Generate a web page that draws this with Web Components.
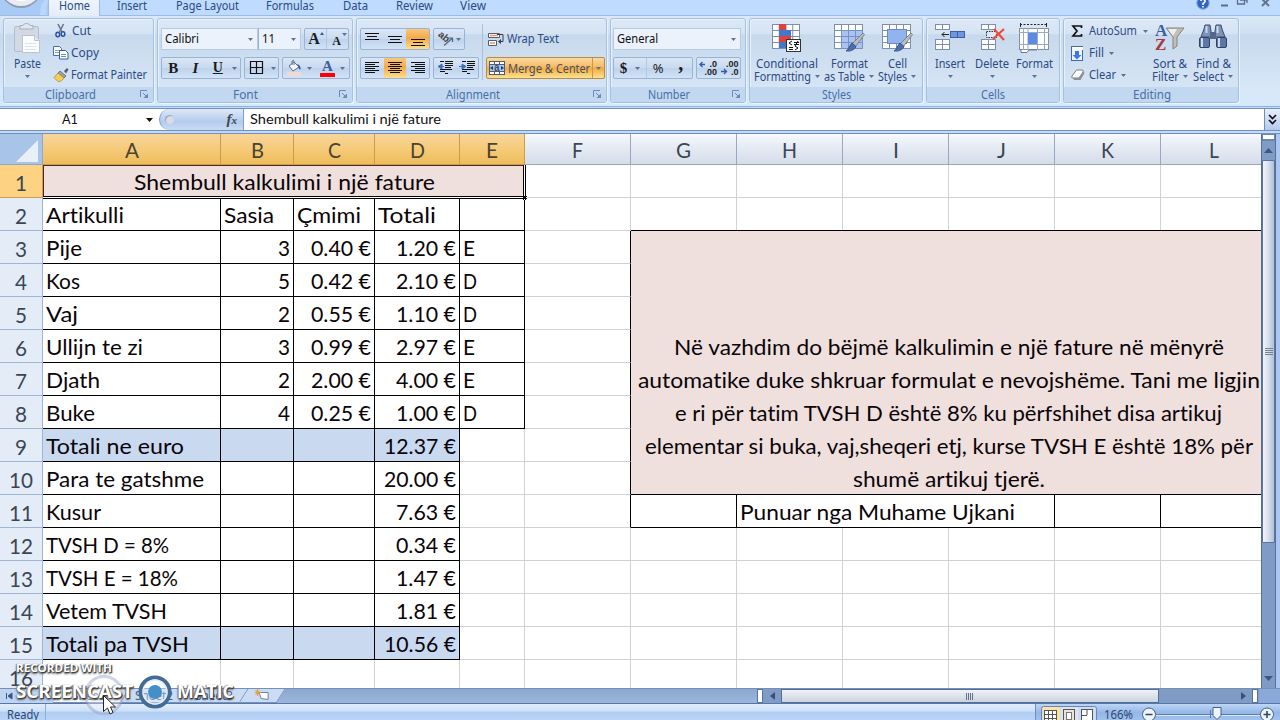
<!DOCTYPE html>
<html lang="sq">
<head>
<meta charset="utf-8">
<title>Shembull kalkulimi i një fature</title>
<style>
html,body{margin:0;height:720px;overflow:hidden;background:#bfdbff}
body{font-family:"Noto Sans","Open Sans",sans-serif;font-size:12px;color:#2b4b85;font-variant-ligatures:none}
</style>
</head>
<body>
<excel-app></excel-app>
<script>
const fits = [];
const def = (name, css, html, init) => {
  const tpl = document.createElement('template');
  customElements.define(name, class extends HTMLElement {
    constructor() { super(); this.attachShadow({mode: 'open'}); }
    connectedCallback() {
      if (this.ready) return;
      this.ready = true;
      tpl.innerHTML = '<style>' + css + '</style>' + (typeof html === 'function' ? html(this) : html);
      this.shadowRoot.append(document.importNode(tpl.content, true));
      if (init) init(this);
    }
  });
};

/* Text that is condensed or widened to a given advance width */
def('x-t', ':host{display:inline-block;white-space:nowrap;flex:none}span{display:inline-block;transform-origin:0 50%}', '<span><slot></slot></span>',
  el => { if (el.hasAttribute('w')) fits.push(el); });
const T = (s, w) => `<x-t w="${w}">${s.replace('&', '&amp;')}</x-t>`;

const grid = (x, y, w, h, nx, ny, fill = '#fff', st = '#7d8fae') => {
  let s = `<rect x="${x}" y="${y}" width="${w}" height="${h}" fill="${fill}" stroke="${st}"/>`;
  for (let i = 1; i < nx; i++) s += `<path d="M${x + w * i / nx} ${y}v${h}" stroke="${st}"/>`;
  for (let i = 1; i < ny; i++) s += `<path d="M${x} ${y + h * i / ny}h${w}" stroke="${st}"/>`;
  return s;
};
const brush = '<path d="M29 10l1.500 1.500-9 12-3-3z" fill="#b9bcc0" stroke="#6d7278" stroke-width=".8"/><path d="M18 20l4 3.500c-2 4-6 5-10 4.500 3-1.500 3-5.500 6-8z" fill="#4a6fae" stroke="#2c4a80" stroke-width=".8"/>';
const lines = (a) => a.map(([x, y, w]) => `<path d="M${x} ${y + .5}h${w}" stroke="#111"/>`).join('');
const al = k => [0, 1, 2, 3, 4, 5].map(i => { const w = i % 2 ? 10 : 14; return [k == 'l' ? 0 : k == 'r' ? 14 - w : (14 - w) / 2, i * 2 + 1, w]; });
const icons = {
  arr: [5, 3, '<path d="M0 0h5l-2.500 3z" fill="#5b7297"/>'],
  paste: [26, 30, '<rect x=".5" y="3.500" width="24" height="25" rx="1.500" fill="#d2d9e3" stroke="#b3bdcb"/><path d="M6 6V2.500h3Q9.500 .5 12.500 .5T16 2.500h3V6z" fill="#e3e7ed" stroke="#a4afbf"/><path d="M8.500 12.500h12l5 5v12h-17z" fill="#fbfcfe" stroke="#bcc4d0"/><path d="M20.500 12.500v5h5" fill="#e5e9f0" stroke="#bcc4d0"/><path d="M11 20.500h11M11 23.500h11M11 26.500h11" stroke="#dfe4ec"/>'],
  cut: [12, 14, '<path d="M3 0l4 8M8.500 0L4.500 8" stroke="#68778f" stroke-width="1.600"/><ellipse cx="2.800" cy="10.500" rx="1.900" ry="2.300" fill="none" stroke="#2b51a5" stroke-width="1.500"/><ellipse cx="8" cy="10" rx="1.800" ry="2.200" fill="none" stroke="#2b51a5" stroke-width="1.500"/>'],
  copy: [16, 14, '<path d="M.5 .5h6l2 2v7h-8z" fill="#fff" stroke="#4c6cac"/><path d="M2 4.500h5M2 6.500h4" stroke="#8aa4d0"/><path d="M6.500 4.500h6l2.500 2.500v6h-8.500z" fill="#fff" stroke="#3a5ca3"/><path d="M8 8.500h5M8 10.500h5" stroke="#6d8bc4"/>'],
  painter: [15, 14, '<path d="M10 3l3-3 1.500 1.500-2.500 4z" fill="#555b68"/><path d="M6 3l6 5-2 2-6-5z" fill="#9aa2b0" stroke="#535a68" stroke-width=".7"/><path d="M4 5l6 5c-2 3-5 4-6 3.500L0 9.500z" fill="#f3cf52" stroke="#ab832b" stroke-width=".7"/>'],
  launch: [9, 9, '<path d="M.5 7V.5H7" fill="none" stroke="#6b8ab5"/><path d="M3 3l3 3" stroke="#6b8ab5"/><path d="M8 3.500v4.500H3.500z" fill="#6b8ab5"/>'],
  grow: [16, 16, '<path d="M11 4l2-3 2 3z" fill="#35599a"/>'],
  borders: [14, 14, '<path d="M.5 .5h12v12H.5zM6.500 .5v12M.5 6.500h12" fill="none" stroke="#111" stroke-width="1.200"/>'],
  bucket: [15, 16, '<path d="M2 6l5-4 5 5-6 4z" fill="#f3f5f8" stroke="#5b6c8b"/><path d="M5 5V1q1.500-1.500 2 0v4" fill="none" stroke="#69778e"/><path d="M10 4q4 1 3.500 5.500Q11 9 12 7z" fill="#2f59a8"/><rect y="12" width="14" height="4" fill="#f3d9cf"/>'],
  top: [14, 14, lines([[0, 1, 14], [2, 4, 10], [0, 7, 14]])],
  mid: [14, 14, lines([[0, 4, 14], [2, 7, 10], [0, 10, 14]])],
  bot: [14, 14, lines([[0, 7, 14], [2, 10, 10], [0, 13, 14]])],
  left: [14, 14, lines(al('l'))], center: [14, 14, lines(al('c'))], right: [14, 14, lines(al('r'))],
  orient: [17, 16, '<path d="M6 14.500l8-7M14.500 11V7h-4" fill="none" stroke="#58657a" stroke-width="1.200"/>'],
  outd: [16, 14, lines([[3, 0, 4], [8, 0, 8], [8, 2, 8], [8, 4, 8], [8, 6, 6], [3, 8, 12], [3, 10, 5], [8, 12, 3]]) + '<path d="M5 3v5L1 5.500zM4 5.500h3" fill="#3d6fc0" stroke="#3d6fc0"/>'],
  ind: [16, 14, lines([[3, 0, 4], [8, 0, 8], [8, 2, 8], [8, 4, 8], [8, 6, 6], [3, 8, 12], [3, 10, 5], [8, 12, 3]]) + '<path d="M3 3v5l4-2.500zM0 5.500h4" fill="#3d6fc0" stroke="#3d6fc0"/>'],
  wrap: [16, 15, '<path d="M.5 1.500h11v4H.5zM.5 8.500h8v5H.5z" fill="#fff" stroke="#555d6a"/><path d="M2 3.500h8M2 11h5" stroke="#e09a78" stroke-width="1.500"/><path d="M9 2.500h6v7h-3" fill="none" stroke="#333d50"/><path d="M13 7v5l-3-2.500z" fill="#333d50"/>'],
  merge: [16, 14, '<rect x=".5" y=".5" width="15" height="13" fill="#fff" stroke="#4d5b75"/><path d="M5.500 0v3M10.500 0v3M5.500 11v3M10.500 11v3M0 3.500h16M0 10.500h16" stroke="#4d5b75"/><rect x="1" y="4" width="14" height="6" fill="#a5c6f1"/><path d="M1 7l3-2v4zM15 7l-3-2v4z" fill="#183a7a"/>'],
  decp: [16, 14, '<path d="M0 3.500h5M2.500 1L0 3.500 2.500 6" fill="none" stroke="#315ca8" stroke-width="1.300"/>'],
  decm: [16, 14, '<path d="M0 10.500h5M3 8l2.500 2.500L3 13" fill="none" stroke="#315ca8" stroke-width="1.300"/>'],
  cond: [30, 29, grid(.5, 1.500, 27, 24, 4, 4) + '<path d="M7 1h7v6H7zM7 13h12v6H7z" fill="#d8453f"/><path d="M7 7h12v6H7zM7 19h7v6H7z" fill="#4676c8"/><rect x="14.500" y="16.500" width="14" height="12" fill="#fff" stroke="#333"/><path d="M20 18l-3 2 3 2M17 24.500h4M17 26.500h4M22 19.500h5M22 21.500h5M26 18l-3 5M23 23l3 2-3 2" fill="none" stroke="#111"/>'],
  table: [31, 29, grid(.5, 1.500, 28, 24, 4, 4) + '<path d="M8 7.500h20V25H8z" fill="#a9c3ee"/><path d="M7.500 7.500h21v18M7.500 7.500v18M14.500 7.500v18M21.500 7.500v18M8 13.500h20M8 19.500h20" fill="none" stroke="#7591c8"/>' + brush],
  cell: [31, 29, grid(.5, 1.500, 28, 24, 4, 4) + '<rect x="5.500" y="6.500" width="19" height="14" fill="#92b4ee" stroke="#6b8ac4"/>' + brush],
  insert: [31, 28, grid(.5, 1.500, 14, 5, 2, 1) + grid(.5, 16.500, 14, 10, 2, 2) + grid(15.500, 8.500, 14, 6, 2, 1, '#6f97e0', '#3e5fa6') + '<path d="M14 11.500H7M9.500 9L7 11.500 9.500 14" fill="none" stroke="#222"/>'],
  del: [31, 28, grid(4.500, 1.500, 14, 5, 2, 1) + grid(4.500, 16.500, 14, 10, 2, 2) + '<rect x="9.500" y="8.500" width="10" height="6" fill="#dce6f7" stroke="#333" stroke-dasharray="1.500 1"/><path d="M17 6l10 11M27 6L16 16" stroke="#ec4b35" stroke-width="2.200"/>'],
  format: [31, 30, '<path d="M1 1.500h26" stroke="#222" stroke-dasharray="2 1.500"/><path d="M1.500 0v4M27.500 0v4" stroke="#222"/><rect x=".5" y="5.500" width="29" height="21" fill="#fff" stroke="#7d8fae"/><path d="M9 5v22M18.500 5v22M25.500 5v22M4.500 5v22M0 9.500h30M0 21.500h30" stroke="#9aa9c2"/><rect x="9" y="10" width="9" height="11" fill="#5d8be3"/><path d="M2 27v2.500h6L10 27h8" fill="#fff" stroke="#6b7c99"/>'],
  sum: [11, 12, '<path d="M9.500 3V1H1l4 5-4 5h8.500V9" fill="none" stroke="#111" stroke-width="1.700"/>'],
  fill: [13, 15, '<rect x=".5" y=".5" width="11" height="14" fill="#eaf2fd" stroke="#4468a5"/><path d="M1 1h11v3H1z" fill="#fff"/><path d="M4 5h4v4h2.500L6 13.500 1.500 9H4z" fill="#3e7be0"/>'],
  clear: [15, 12, '<path d="M5.500 1h5.500q2 0 1 2L8 9H2Q0 9 1 7z" fill="#fff" stroke="#777d88"/><path d="M8 9l4.500-6.500L13.500 4 9.500 11H3L2 9z" fill="#8b909a"/>'],
  sort: [30, 30, '<path d="M11 5h18l-7 9v9l-4 3V14z" fill="#c0bfbb" stroke="#85847f"/><path d="M13 6h9l-4 7z" fill="#efeeea"/>'],
  find: [28, 27, '<path d="M6 2h5l1 6v6H2l3-8zM22 2h-5l-1 6v6h10l-3-8z" fill="#7e93b8" stroke="#3b4c6b"/><rect x="11" y="9" width="6" height="7" fill="#53678c"/><rect x=".5" y="14.500" width="10" height="10" rx="1.500" fill="#5c76a6" stroke="#2f4265"/><rect x="17.500" y="14.500" width="10" height="10" rx="1.500" fill="#5c76a6" stroke="#2f4265"/><path d="M3 15v9M20 15v9M7.500 3v7M18.500 3v7" stroke="#cdd9ee" stroke-width="2"/>'],
  help: [14, 14, '<circle cx="7" cy="6" r="6.200" fill="#2e66c6" stroke="#8ba5cf"/><path d="M4.800 4q.5-2 2.400-1.800T9 4.500Q8.800 5.500 7 6.500V8M7 9v1.500" fill="none" stroke="#fff" stroke-width="1.600"/>'],
  expand: [9, 12, '<path d="M1 1l3.500 3.500L8 1M1 6l3.500 3.500L8 6" fill="none" stroke="#111" stroke-width="1.600"/>'],
};
const svg = n => { const [w, h, s] = icons[n]; return `<svg width="${w}" height="${h}" viewBox="0 0 ${w} ${h}">${s}</svg>`; };
def('x-icon', ':host{display:inline-flex;flex:none;position:relative}svg{display:block;overflow:visible}', el => svg(el.getAttribute('name')));
const I = (n, st = '') => `<x-icon name="${n}" style="${st}"></x-icon>`;
const A = (st = '') => I('arr', st);

/* Ribbon tabs */
def('ribbon-tabs', `:host{display:flex;height:15px;position:relative;background:#bfdbff;box-sizing:border-box}
 .tab{line-height:12px;height:15px;box-sizing:border-box}
 .on{width:52px;background:linear-gradient(#eef5fd,#e3edf9);border:solid #9dbde6;border-width:0 1px;height:16px;padding-left:10px;position:relative;z-index:1}
 .orb{width:48px;flex:none;overflow:hidden;height:15px}
 .r{display:flex;margin-left:auto;width:84px;gap:0}`,
 `<div class="orb"><svg width="48" height="15"><rect width="48" height="15" fill="#a9caf5"/><path d="M46 15q0-8 2-15h-2q-6 2-6 15z" fill="#b9d6fb"/><circle cx="21" cy="-13" r="21" fill="#8f9db4"/><circle cx="21" cy="-14" r="20" fill="#e9edf3"/><circle cx="21" cy="-16" r="17" fill="#fff"/></svg></div>
 <div class="tab on">${T('Home', 31)}</div>
 ${[['Insert', 30, 17], ['Page Layout', 63, 29], ['Formulas', 48, 27], ['Data', 25, 29], ['Review', 37, 28], ['View', 26, 27]].map(([s, w, m]) => `<div class="tab" style="margin-left:${m}px">${T(s, w)}</div>`).join('')}
 <div class="r">${I('help', 'margin-top:-3px')}<svg width="68" height="15"><path d="M11 5.500h7" stroke="#5a6d8e" stroke-width="2"/><path d="M34.500 0v4h-7v-4M30 0h7v3" fill="none" stroke="#5a6d8e" stroke-width="1.300"/><path d="M52 -1l7 7M59 -1l-7 7" stroke="#64748f" stroke-width="2"/></svg></div>`);

/* Ribbon group */
def('rb-group', `:host{display:flex;flex-direction:column;flex:none;box-sizing:border-box;height:85px;border:1px solid #a5c1e2;border-radius:3px;background:linear-gradient(#dce8f6 0,#d6e3f3 18%,#c8d9ed 19%,#d9e8f7 100%);box-shadow:1px 1px 0 #eaf3fd,inset 1px 1px 0 #e8f1fb;overflow:hidden}
 .c{height:68px;display:flex;box-sizing:border-box;flex:none}.l{height:15px;flex:none;background:#c1d8f0;display:flex;position:relative;color:#4a6fa8;line-height:14px;align-items:center}
 .l x-icon{margin-left:auto;margin-right:4px}`,
 el => `<div class="c"><slot></slot></div><div class="l"><x-t w="${el.getAttribute('lw')}" style="margin-left:${el.getAttribute('lx')}px">${el.getAttribute('label')}</x-t>${el.hasAttribute('launch') ? I('launch') : ''}</div>`);

/* Small labelled command */
def('rb-cmd', ':host{display:flex;align-items:center;height:22px;line-height:16px}.i{flex:none;display:flex;justify-content:flex-start}', el => `<div class="i" style="width:${el.getAttribute('iw')}px">${I(el.getAttribute('icon'))}</div><slot></slot>`);

/* Large command: icon over one or two caption lines */
def('rb-big', ':host{display:flex;flex-direction:column;align-items:center;box-sizing:border-box;padding-top:4px;flex:none}.i{height:34px;display:flex;align-items:flex-start;position:relative}.t{line-height:13px;height:13px;display:flex;align-items:center;gap:4px;flex:none}.z{position:absolute;font:bold 17px/14px "Liberation Serif",serif;left:0}',
 el => { const g = n => el.getAttribute(n); return `<div class="i">${I(g('icon'))}${g('icon') == 'sort' ? '<div class="z" style="top:1px;color:#3c5fa8">A</div><div class="z" style="top:15px;color:#a5393d">Z</div>' : ''}</div><div class="t">${T(g('a'), g('aw'))}</div><div class="t">${g('b') ? T(g('b'), g('bw')) : ''}${A()}</div>`; });
const big = (icon, w, m, a, aw, b = '', bw = 0) => `<rb-big style="width:${w}px;margin-left:${m}px" icon="${icon}" a="${a.replace('&', '&amp;')}" aw="${aw}" b="${b}" bw="${bw}"></rb-big>`;

/* Joined button strip */
def('rb-strip', ':host{display:flex;flex:none;box-sizing:border-box;height:22px;border:1px solid #9ab4d8;border-radius:2px;background:linear-gradient(#d9e6f6,#c9daef 50%,#bdd2ec 51%,#d3e3f6)}', '<slot></slot>');
def('rb-b', `:host{display:flex;align-items:center;justify-content:center;height:20px;flex:1;position:relative;box-sizing:border-box;color:#1b1b1b}:host([on]){background:linear-gradient(#f9c77c,#f5a848 45%,#fde08a)}:host([sep]){border-left:1px solid #b1c8e5}`, '<slot></slot>');
def('rb-combo', ':host{display:flex;align-items:center;box-sizing:border-box;height:22px;border:1px solid #b3cbe8;background:#ebf2fb;color:#111;padding:0 4px 0 3px;justify-content:space-between;flex:none;line-height:18px}', '<slot></slot>' + A());

def('ribbon-bar', `:host{display:flex;height:92px;border-top:1px solid #9dbde6;border-bottom:1px solid #8fb2dd;box-sizing:border-box;background:linear-gradient(#dbe8f7,#cfdff1 20%,#c7d9ee 21%,#d8e7f8 80%,#d5e9fb);padding:2px 0 0 3px;gap:3px}
 .rows{display:flex;flex-direction:column;gap:7px;padding-top:9px;flex:none}.row{display:flex;gap:3px;height:22px;flex:none}
 .list{padding-top:1px;flex:none}.ser{font-family:"Liberation Serif",serif;font-weight:bold;font-size:15px;line-height:18px}
 .sep{width:1px;height:56px;background:#a6c0e0;margin:5px 3px 0 17px;flex:none}.dec{font:bold 9px/8px "Liberation Sans",sans-serif;position:absolute;top:2px;left:2px;width:18px;text-align:right;color:#222}`,
`<rb-group style="width:151px" label="Clipboard" lw="51" lx="41" launch>${big('paste', 42, 2, 'Paste', 27)}
 <div class="list" style="margin-left:4px"><rb-cmd icon="cut" iw="17" style="padding-left:3px">${T('Cut', 19)}</rb-cmd><rb-cmd icon="copy" iw="18" style="padding-left:1px">${T('Copy', 28)}</rb-cmd><rb-cmd icon="painter" iw="17" style="padding-left:2px">${T('Format Painter', 76)}</rb-cmd></div></rb-group>
 <rb-group style="width:196px" label="Font" lw="25" lx="75" launch><div class="rows" style="margin-left:3px">
  <div class="row" style="gap:0"><rb-combo style="width:97px">${T('Calibri', 34)}</rb-combo><rb-combo style="width:43px;border-left:1px solid #9ab4d8">${T('11', 13)}</rb-combo>
   <rb-strip style="width:45px;margin-left:3px"><rb-b><span class="ser" style="font-size:16px;margin-right:3px">A</span>${I('grow', 'position:absolute;left:4px;top:2px')}</rb-b><rb-b sep><span class="ser" style="font-size:12px;padding-top:3px;margin-right:2px">A</span><x-icon name="arr" style="position:absolute;left:15px;top:4px"></x-icon></rb-b></rb-strip></div>
  <div class="row"><rb-strip style="width:80px"><rb-b><span class="ser">B</span></rb-b><rb-b><span class="ser" style="font-style:italic">I</span></rb-b><rb-b><span class="ser" style="text-decoration:underline;font-size:14px">U</span></rb-b><rb-b style="flex:none;width:11px">${A()}</rb-b></rb-strip>
   <rb-strip style="width:35px"><rb-b style="gap:7px;padding-left:2px">${I('borders')}${A()}</rb-b></rb-strip>
   <rb-strip style="width:68px"><rb-b style="gap:5px">${I('bucket')}${A()}</rb-b><rb-b style="gap:5px"><span class="ser" style="color:#3c5f9e;border-bottom:4px solid #f00;line-height:13px;width:15px;text-align:center">A</span>${A()}</rb-b></rb-strip></div></div></rb-group>
 <rb-group style="width:251px" label="Alignment" lw="54" lx="89" launch><div class="rows" style="margin-left:3px">
  <div class="row"><rb-strip style="width:70px"><rb-b>${I('top')}</rb-b><rb-b>${I('mid')}</rb-b><rb-b on>${I('bot')}</rb-b></rb-strip><rb-strip style="width:32px"><rb-b style="gap:1px"><span style="font:bold 10px/10px 'Liberation Sans';transform:rotate(40deg);position:absolute;left:4px;top:3px;color:#444">ab</span>${I('orient')}${A()}</rb-b></rb-strip></div>
  <div class="row"><rb-strip style="width:70px"><rb-b>${I('left')}</rb-b><rb-b on>${I('center')}</rb-b><rb-b>${I('right')}</rb-b></rb-strip><rb-strip style="width:46px"><rb-b>${I('outd')}</rb-b><rb-b>${I('ind')}</rb-b></rb-strip></div></div>
  <div class="sep" style="margin-left:3px"></div><div class="rows"><rb-cmd icon="wrap" iw="19" style="padding-left:2px">${T('Wrap Text', 52)}</rb-cmd>
  <rb-strip style="width:119px;border-color:#b58d47;background:linear-gradient(#fbd9a0,#f6bb62 45%,#f3a83e 50%,#fde28e)"><rb-b style="justify-content:flex-start;padding-left:2px;color:#47506a">${I('merge')}<span style="position:absolute;left:7px;top:3px;font:bold 10px/13px 'Liberation Sans'">a</span><span style="width:3px"></span>${T('Merge &', 45)}<span style="width:3px"></span>${T('Center', 34)}</rb-b><rb-b sep style="flex:none;width:12px;border-color:#c6994a">${A()}</rb-b></rb-strip></div></rb-group>
 <rb-group style="width:136px" label="Number" lw="42" lx="37" launch><div class="rows" style="margin-left:2px"><rb-combo style="width:128px">${T('General', 41)}</rb-combo>
  <div class="row"><rb-strip style="width:80px"><rb-b style="flex:none;width:32px;gap:8px"><span class="ser">$</span>${A()}</rb-b><rb-b sep style="font-size:13px">%</rb-b><rb-b><span class="ser" style="font-size:20px;line-height:2px;padding-bottom:11px">,</span></rb-b></rb-strip>
  <rb-strip style="width:45px"><rb-b>${I('decp')}<span class="dec">.0<br>.00</span></rb-b><rb-b>${I('decm')}<span class="dec">.00<br>.0</span></rb-b></rb-strip></div></div></rb-group>
 <rb-group style="width:174px" label="Styles" lw="29" lx="72">${big('cond', 66, 4, 'Conditional', 62, 'Formatting', 57)}${big('table', 52, 3, 'Format', 37, 'as Table', 41)}${big('cell', 40, 2, 'Cell', 19, 'Styles', 29)}</rb-group>
 <rb-group style="width:134px" label="Cells" lw="24" lx="54">${big('insert', 36, 5, 'Insert', 30)}${big('del', 38, 5, 'Delete', 34)}${big('format', 38, 4, 'Format', 37)}</rb-group>
 <rb-group style="width:176px" label="Editing" lw="38" lx="69"><div class="list" style="width:83px;margin-left:7px"><rb-cmd icon="sum" iw="17" style="padding-left:1px">${T('AutoSum', 48)}${A('margin-left:6px')}</rb-cmd><rb-cmd icon="fill" iw="18" >${T('Fill', 15)}${A('margin-left:5px')}</rb-cmd><rb-cmd icon="clear" iw="18">${T('Clear', 27)}${A('margin-left:5px')}</rb-cmd></div>${big('sort', 38, -3, 'Sort &', 34, 'Filter', 27)}${big('find', 42, 3, 'Find &', 35, 'Select', 31)}</rb-group>`);

/* Formula bar */
def('formula-bar', `:host{display:flex;height:23px;box-sizing:border-box;border:solid #7590b8;border-width:1px 0;background:#fff;color:#111;font-family:Lato,"Noto Sans",sans-serif;font-size:13px;line-height:21px;margin-top:0}
 .n{width:159px;display:flex;align-items:center;box-sizing:border-box;padding-left:62px}.p{width:85px;box-sizing:border-box;background:linear-gradient(#dfe9f7,#b3cbee 60%,#c9dcf5);border:1px solid #7c9ccb;border-width:0 1px 0 1px;border-radius:11px 0 0 11px;display:flex;align-items:center}
 .k{width:9px;height:9px;border-radius:5px;background:#d9dee6;box-shadow:inset 1px 1px 1px #98a7bf;margin-left:5px}.f{margin-left:auto;margin-right:6px;font:italic bold 15px/18px "Liberation Serif",serif;color:#444}
 .f small{font-size:11px}.v{padding-left:6px;flex:1}.x{width:16px;background:linear-gradient(#e6effb,#b4cbee);border-left:1px solid #6f8db9;display:flex;align-items:center;justify-content:center;box-sizing:border-box}`,
 `<div class="n">${T('A1', 16)}<svg width="7" height="4" style="margin-left:68px"><path d="M0 0h7L3.500 4z" fill="#111"/></svg></div><div class="p"><div class="k"></div><div class="f">f<small>x</small></div></div><div class="v">${T('Shembull kalkulimi i një fature', 191)}</div><div class="x">${I('expand')}</div>`);

/* Worksheet */
const cols = [43, 178, 73, 81, 85, 65, 106, 106, 106, 106, 106, 106, 106];
const data = [['Artikulli', 78, 'Sasia', 50, 'Çmimi', 64, 'Totali', 58, '', 0],
 ['Pije', 36, '3', 12, '0.40 €', 60, '1.20 €', 60, 'E', 12], ['Kos', 34, '5', 12, '0.42 €', 60, '2.10 €', 60, 'D', 14],
 ['Vaj', 32, '2', 12, '0.55 €', 60, '1.10 €', 60, 'D', 14], ['Ullijn te zi', 97, '3', 12, '0.99 €', 60, '2.97 €', 60, 'E', 12],
 ['Djath', 54, '2', 12, '2.00 €', 60, '4.00 €', 60, 'E', 12], ['Buke', 49, '4', 12, '0.25 €', 60, '1.00 €', 60, 'D', 14],
 ['Totali ne euro', 138, '', 0, '', 0, '12.37 €', 72], ['Para te gatshme', 158, '', 0, '', 0, '20.00 €', 72], ['Kusur', 55, '', 0, '', 0, '7.63 €', 60],
 ['TVSH D = 8%', 123, '', 0, '', 0, '0.34 €', 60], ['TVSH E = 18%', 132, '', 0, '', 0, '1.47 €', 60], ['Vetem TVSH', 121, '', 0, '', 0, '1.81 €', 60], ['Totali pa TVSH', 143, '', 0, '', 0, '10.56 €', 72]];
def('sheet-grid', `:host{display:block;width:1261px;height:554px;overflow:hidden;background:#fff;color:#0a0508;font-family:Lato,"Noto Sans",sans-serif;font-size:20.500px;flex:none}
 .g{display:grid;grid-template-columns:${cols.map(c => c + 'px').join(' ')};grid-template-rows:31px repeat(16,33px);width:1315px}
 .g>div{box-sizing:border-box;border:solid #cfd3d8;border-width:0 1px 1px 0;line-height:33px;padding:1px 3px 0 3px;white-space:nowrap;min-width:0;height:auto;overflow:hidden}
 .g .h{background:linear-gradient(#f6f9fc,#e5ebf4 45%,#d5dde9);border-color:#97a8c0;color:#3a4654;text-align:center;line-height:31px;padding:0;font-size:21px}
 .g .h.on{background:linear-gradient(#f8d59b,#f5ca79 50%,#eebd5b);border-color:#cf9a4b;color:#4a4433}
 .g .r{background:#e4ecf7;border-color:#9eb6d6;color:#3a4654;text-align:center;padding:1px 0 0;font-size:21px}.g .r.on{background:#fdd283;border-color:#d69a4f}
 .g .k{border-color:#000}.g .n{text-align:right}.g .b{background:#c8d9f0}.g .p{background:#efdfdd}
 .g .t{grid-area:2/2/3/7;text-align:center;border-color:#000;position:relative;box-shadow:inset 1px 1px 0 #4b2b22;padding-right:2px}
 .g .m{grid-area:4/8/12/14;display:flex;flex-direction:column;justify-content:flex-end;align-items:center;line-height:33px;box-shadow:0 -1px 0 #000;overflow:visible;padding:0}
 .m x-t{position:relative;top:2px}
 .g .c{background:#a9c4e9;border-color:#8ba8d2;padding:6px 4px 4px 0;display:flex;justify-content:flex-end}.sel{grid-area:2/2/3/7;position:relative}
 .g>.sel{border:0;overflow:visible;padding:0}.sel i{position:absolute;box-sizing:border-box}`,
 () => {
  let s = '<div class="c"><svg width="22" height="22"><path d="M22 0v22H0z" fill="#e9eff6"/></svg></div>';
  'ABCDEFGHIJKL'.split('').forEach((c, i) => s += `<div class="h ${i < 5 ? 'on' : ''}" style="grid-area:1/${i + 2}">${T(c, [14, 13, 13, 15, 12, 11, 15, 15, 6, 9, 13, 10][i])}</div>`);
  for (let r = 1; r <= 16; r++) {
    s += `<div class="r ${r == 1 ? 'on' : ''}" style="grid-area:${r + 1}/1">${T('' + r, r > 9 ? 24 : 12)}</div>`;
    for (let c = 1; c <= 12; c++) {
      if (r == 1 && c <= 5 || r > 2 && r < 11 && c > 6 || r == 11 && c > 7 && c < 11) continue;
      const d = r >= 2 && r <= 15 ? data[r - 2] : [], v = d[2 * c - 2], w = d[2 * c - 1];
      let k = r >= 2 && r <= 15 && (c <= 4 || c == 5 && r <= 8) || r == 11 && c > 6 ? 'k ' : '';
      if (r > 2 && c > 1 && c < 5) k += 'n ';
      if ((r == 9 || r == 15) && c <= 4) k += 'b';
      const edge = c == 6 && r > 2 && r < 12 ? ';border-right-color:#000' : '';
      s += `<div class="${k}" style="grid-area:${r + 1}/${c + 1}${edge}">${v ? T(v, w) : ''}</div>`;
    }
  }
  s += `<div class="t p">${T('Shembull kalkulimi i një fature', 301)}</div><div class="sel"><i style="left:0;right:0;bottom:-1px;height:3px;background:#fff;border:solid #000;border-width:1px 0"></i><i style="right:-1px;top:0;bottom:-1px;width:3px;background:#fff;border:solid #000;border-width:0 1px"></i><i style="right:-2px;bottom:-2px;width:5px;height:5px;background:#000;border:1px dotted #fff"></i></div>`;
  s += `<div class="m p k">${[['Në vazhdim do bëjmë kalkulimin e një fature në mënyrë', 550], ['automatike duke shkruar formulat e nevojshëme. Tani me ligjin', 622], ['e ri për tatim TVSH D është 8% ku përfshihet disa artikuj', 547], ['elementar si buka, vaj,sheqeri etj, kurse TVSH E është 18% për', 608], ['shumë artikuj tjerë.', 192]].map(([a, w]) => T(a, w)).join('')}</div>`;
  s += `<div class="k" style="grid-area:12/9/13/12">${T('Punuar nga Muhame Ujkani', 275)}</div>`;
  return `<div class="g">${s}</div>`;
 });

def('v-scroll', `:host{display:flex;flex-direction:column;width:15px;height:554px;background:#809cc6;border:solid #54719d;border-width:0 1px;box-sizing:border-box;flex:none;align-items:stretch}
 .s{height:7px;background:#fff;border:1px solid #6a87b2;box-sizing:border-box;border-bottom-width:2px}.a{height:19px;display:flex;align-items:center;justify-content:center}.t{height:383px;background:linear-gradient(90deg,#f2f5fa,#d8dfeb 50%,#aebfd9);border:1px solid #5b7499;box-sizing:border-box;border-radius:1px;display:flex;align-items:center;justify-content:center}.e{margin-top:auto}`,
 `<div class="s"></div><div class="a"><svg width="9" height="5"><path d="M0 5l4.500-5L9 5z" fill="#3b5880"/></svg></div><div class="t"><svg width="8" height="8"><path d="M0 .5h8M0 2.500h8M0 4.500h8M0 6.500h8" stroke="#71829b"/></svg></div><div class="a e"><svg width="9" height="5"><path d="M0 0h9L4.500 5z" fill="#3b5880"/></svg></div>`);

/* Sheet tabs with the horizontal scroll bar */
def('sheet-tabs', `:host{display:flex;height:15px;background:linear-gradient(#8ba7cf,#9db6dc);border-top:1px solid #7590b8;box-sizing:border-box;line-height:14px;overflow:hidden;align-items:center;color:#3b5c91;position:relative}
 .nav{width:57px;padding-left:6px;box-sizing:border-box;background:#bfd4f1;height:14px;display:flex;align-items:center;flex:none}.tb{background:#cadcf4;height:14px;transform:skewX(-32deg);border-right:1px solid #7891b9;border-bottom:1px solid #7891b9;flex:none;box-sizing:border-box;text-align:center}
 .tb x-t,.tb svg{transform:skewX(32deg)}.h{margin-left:auto;width:502px;display:flex;height:14px;align-items:center;flex:none;background:#809bc4}.th{width:378px;height:14px;box-sizing:border-box;border:1px solid #526d96;background:linear-gradient(#eff2f7,#cad3df);display:flex;align-items:center;justify-content:center;margin-left:6px}
 .sp{width:6px;height:14px;background:#fff;border:1px solid #58759f;box-sizing:border-box}`,
 `<div class="nav"><svg width="40" height="8"><path d="M.5 1v6M6 1v6L2 4z" stroke="#36568c" fill="#36568c"/></svg></div>
 <div class="tb" style="width:68px;background:#fff">${T('Sheet1', 38)}</div><div class="tb" style="width:59px">${T('Sheet2', 38)}</div><div class="tb" style="width:60px">${T('Sheet3', 38)}</div>
 <div class="tb" style="width:37px"><svg width="16" height="12"><path d="M4.500 3.500h9v7l-7-1z" fill="#fff" stroke="#6f81a0"/><path d="M3 0v7M0 3.500h6M1 1l4 5M5 1L1 6" stroke="#e99a34"/></svg></div>
 <div class="h"><div class="sp"></div><svg width="5" height="8" style="margin-left:7px"><path d="M5 0v8L0 4z" fill="#35517d"/></svg><div class="th"><svg width="8" height="7"><path d="M.5 0v7M2.500 0v7M4.500 0v7M6.500 0v7" stroke="#61718b"/></svg></div><svg width="5" height="8" style="margin-left:82px"><path d="M0 0v8l5-4z" fill="#35517d"/></svg><div class="sp" style="margin-left:6px"></div></div><div style="width:21px;height:14px;flex:none;background:#8aa8d8"></div>`);

def('status-bar', `:host{display:flex;height:18px;border-top:1px solid #5578aa;box-sizing:border-box;background:linear-gradient(#e0ecfb,#cfe1f8 40%,#b0cdf3 50%,#bcd5f7);line-height:15px;overflow:hidden;color:#2c4872}
 .a{width:46px;padding:3px 0 0 7px;box-sizing:border-box;border-right:1px solid #90aeda;flex:none}.z{margin-left:auto;width:245px;background:linear-gradient(#bfd6f6,#95b7e6 50%,#a3c3ee);border-left:1px solid #6e8fc0;display:flex;flex:none;padding-top:2px;box-sizing:border-box}svg{flex:none}`,
 `<div class="a">${T('Ready', 32)}</div><div class="z"><svg width="58" height="16" style="margin-left:5px"><rect x=".5" y=".5" width="55" height="18" rx="2" fill="#cbdcf4" stroke="#6b87b3"/><rect x="2" y="1" width="17" height="15" fill="#fbe3a0"/>${grid(3.500, 4.500, 12, 12, 3, 3, '#fff', '#555')}<rect x="20" y="1" width="17" height="15" fill="#dde4ed"/><rect x="22.500" y="3.500" width="11" height="12" fill="#e9e5dc" stroke="#555"/><rect x="25.500" y="6.500" width="5" height="7" fill="#fff" stroke="#777"/><rect x="40.500" y="3.500" width="11" height="12" fill="#fff" stroke="#555"/><path d="M46 3v6M41 9.500h5" stroke="#555"/></svg><div style="padding-top:1px;margin-left:5px">${T('166%', 29)}</div>
 <svg width="140" height="16" style="margin-left:7px"><path d="M16 8.500h108" stroke="#557bb0"/><path d="M16 9.500h108" stroke="#dce9fb"/><path d="M70.500 4v8" stroke="#557bb0"/><g fill="#eef4fc" stroke="#46618c"><circle cx="9" cy="8.500" r="6.500"/><circle cx="127" cy="8.500" r="6.500"/><path d="M73 1.500h8v8l-4 4-4-4z"/></g><path d="M5.500 8.500h7M123.500 8.500h7M127 5v7" stroke="#33486c" stroke-width="1.600"/></svg></div>`);

/* Recorder watermark and mouse pointer, over the workbook */
def('screencast-mark', `:host{position:absolute;left:16px;top:661px;width:222px;height:56px;color:#fff;font-family:"Open Sans","Noto Sans",sans-serif;font-weight:700;text-shadow:1px 1px 1px #333,-1px 0 1px #777,0 2px 2px #555}
 .a{font-size:11px;line-height:14px}.b{display:flex;font-size:17px;line-height:20px;align-items:center;margin-top:0}svg{position:absolute;overflow:visible}.w{width:44px}`,
 `<svg style="left:68px;top:14px" width="42" height="42"><circle cx="20" cy="20" r="18.500" fill="#ffffff55" stroke="#8a94bd66" stroke-width="3"/></svg><div class="a" style="height:21px">${T('RECORDED WITH', 96)}</div><div class="b">${T('SCREENCAST', 117)}<div class="w"></div>${T('MATIC', 57)}</div>
 <svg style="left:121px;top:13px" width="36" height="36"><circle cx="18" cy="18" r="14.500" fill="#ffffff55" stroke="#446b91" stroke-width="4"/><circle cx="18" cy="18" r="12" fill="none" stroke="#e1edf8" stroke-width="1.500"/><circle cx="18" cy="18" r="7" fill="#428fca"/></svg>
 <svg style="left:87px;top:34px" width="13" height="20"><path d="M.5 .5v16l4-3.500 2.500 6 3-1.500-2.500-5.500h5z" fill="#fff" stroke="#222"/></svg>`);

def('excel-app', `:host{display:flex;flex-direction:column;width:1280px;height:720px;overflow:hidden;position:relative;background:#bfdbff}
 .w{display:flex;height:555px;border-top:1px solid #7590b8;margin-top:2px;box-sizing:border-box;background:#abc6f0;flex:none}ribbon-tabs,ribbon-bar,formula-bar,sheet-tabs,status-bar{flex:none}`,
 '<ribbon-tabs></ribbon-tabs><ribbon-bar></ribbon-bar><formula-bar style="margin-top:1px"></formula-bar><div class="w"><sheet-grid></sheet-grid><v-scroll></v-scroll></div><sheet-tabs></sheet-tabs><status-bar></status-bar><screencast-mark></screencast-mark>');

/* All roots are in place: measure each text once and set its scale */
const natural = fits.map(el => el.shadowRoot.querySelector('span').getBoundingClientRect().width);
fits.forEach((el, i) => {
  const w = +el.getAttribute('w');
  el.style.width = w + 'px';
  el.style.textAlign = 'left';
  if (natural[i]) el.shadowRoot.querySelector('span').style.transform = `scaleX(${w / natural[i]})`;
});
</script>
</body>
</html>
